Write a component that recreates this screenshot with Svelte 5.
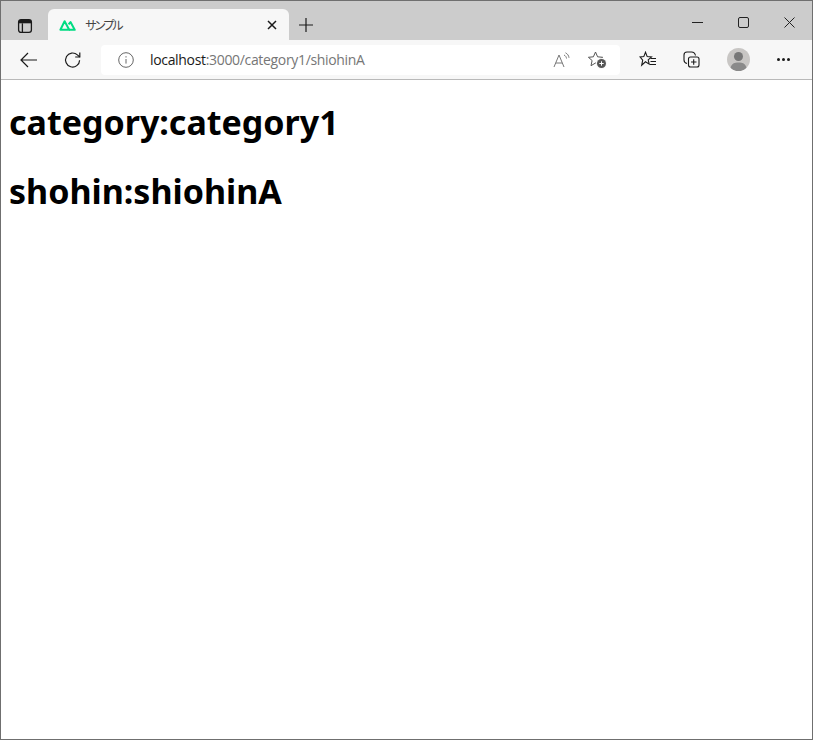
<script>
    const category = "category1";
    const shohin = "shiohinA";
</script>

<div class="window">
    <div class="tabstrip">
        <button class="tab-actions" aria-label="tab actions">
            <svg width="16" height="16" viewBox="0 0 16 16" fill="none" stroke="#1a1a1a" stroke-width="1.3">
                <rect x="1.6" y="1.6" width="12.8" height="12.8" rx="2.4" />
                <path d="M5.4 5.3v9" />
                <path d="M2 2h12v3.300H2z" fill="#1a1a1a" stroke="none" />
            </svg>
        </button>
        <div class="tab">
            <svg class="favicon" width="17" height="12" viewBox="0 0 17 12" fill="none" stroke="#00dc82" stroke-width="2" stroke-linejoin="round">
                <path d="M1.400 10.800 5.600 2.200l4.600 8.600z" />
                <path d="M9.600 5.400 11.500 3l4.200 7.800H10" />
            </svg>
            <span class="tab-title">サンプル</span>
            <svg class="tab-close" width="10" height="10" viewBox="0 0 10 10" stroke="#1a1a1a" stroke-width="1.5">
                <path d="M1 1l8 8M9 1l-8 8" />
            </svg>
        </div>
        <svg class="new-tab" width="14" height="14" viewBox="0 0 14 14" stroke="#1a1a1a" stroke-width="1.2">
            <path d="M7 0v14M0 7h14" />
        </svg>
        <div class="win-controls">
            <svg width="11" height="11" viewBox="0 0 11 11" stroke="#222" stroke-width="1"><path d="M0 5.500h11" /></svg>
            <svg width="11" height="11" viewBox="0 0 11 11" fill="none" stroke="#222" stroke-width="1"><rect x="0.500" y="0.500" width="10" height="10" rx="1.500" /></svg>
            <svg width="11" height="11" viewBox="0 0 11 11" stroke="#222" stroke-width="1"><path d="M0.500 0.500l10 10M10.500 0.500l-10 10" /></svg>
        </div>
    </div>

    <div class="toolbar">
        <svg class="back" width="18" height="16" viewBox="0 0 18 16" fill="none" stroke="#1a1a1a" stroke-width="1.2">
            <path d="M1 8h16M8 1 1 8l7 7" />
        </svg>
        <svg class="reload" width="18" height="18" viewBox="0 0 18 18" fill="none" stroke="#1a1a1a" stroke-width="1.2">
            <path d="M15.600 9.200a7 7 0 1 1-2.200-5.300L15.800 6" />
            <path d="M15.800 1.400V6h-4.600" />
        </svg>
        <div class="address">
            <svg width="16" height="16" viewBox="0 0 16 16" fill="none" stroke="#666" stroke-width="1">
                <circle cx="8" cy="8" r="7.300" />
                <path d="M8 7v4.600M8 4.200v1.300" />
            </svg>
            <div class="url"><span class="host">localhost</span>:3000/category1/shiohinA</div>
            <svg class="read" width="17" height="16" viewBox="0 0 17 16" fill="none" stroke="#777" stroke-width="1">
                <path d="M1 15 6 3l5 12M2.800 11h6.400" />
                <path d="M11 3c1.500.7 2.300 1.800 2.500 3.500M12.500 .8c2 1 3.300 2.800 3.500 5" />
            </svg>
            <svg class="fav-add" width="19" height="18" viewBox="0 0 19 18" fill="none" stroke="#555" stroke-width="1">
                <path d="M7.500 1 9.600 5.800l5 .5-3.700 3.200 1.100 5-4.500-2.500L3 14.700l1.100-5.200L.4 6.300l5-.5z" />
                <circle cx="13.500" cy="12.500" r="5.500" fill="#f7f7f7" stroke="none" />
                <circle cx="13.500" cy="12.500" r="4.500" fill="#555" stroke="none" />
                <path d="M13.500 10.300v4.400M11.300 12.500h4.400" stroke="#fff" />
            </svg>
        </div>
        <svg class="favs" width="18" height="17" viewBox="0 0 18 17" fill="none" stroke="#1a1a1a" stroke-width="1.100">
            <path d="M6.500 1.200 8.200 5.600l4.300.3-3.300 3 1 4.200-3.700-2.300-3.800 3.400 1-5L1 5.900l3.800-.3z" />
            <path d="M11.500 7.500H17M11.500 10.500H17M11 13.500h6" />
        </svg>
        <svg class="collections" width="17" height="17" viewBox="0 0 17 17" fill="none" stroke="#1a1a1a" stroke-width="1.100">
            <path d="M4 12.500C2 12 1 10.500 1 9V4c0-1.700 1.300-3 3-3h4.500C10.500 1 12 2.200 12.500 4.500" />
            <rect x="5.500" y="6" width="10.500" height="10" rx="2" />
            <path d="M10.700 8.300v5.500M8 11h5.500" />
        </svg>
        <div class="avatar">
            <svg width="23" height="23" viewBox="0 0 23 23">
                <circle cx="11.500" cy="8.500" r="4.500" fill="#777" />
                <path d="M3.500 20c1-4.500 4-5.500 8-5.500s7 1 8 5.500a11.500 11.500 0 0 1-16 0z" fill="#8a8a8a" />
            </svg>
        </div>
        <div class="more"><i></i><i></i><i></i></div>
    </div>

    <main>
        <h1>category:{category}</h1>
        <h1>shohin:{shohin}</h1>
    </main>
</div>

<style>
    :global(body) {
        margin: 0;
    }

    .window {
        box-sizing: border-box;
        width: 813px;
        height: 740px;
        border: 1px solid #6f6f6f;
        display: flex;
        flex-direction: column;
        background: #fff;
        overflow: hidden;
    }

    .tabstrip {
        height: 39px;
        flex: none;
        display: flex;
        align-items: flex-end;
        background: #cccccc;
    }

    .tab-actions {
        width: 47px;
        height: 39px;
        padding: 10px 0 0;
        border: none;
        background: none;
        display: flex;
        align-items: center;
        justify-content: center;
    }

    .tab {
        box-sizing: border-box;
        width: 241px;
        height: 31px;
        padding: 0 12px 0 11px;
        display: flex;
        align-items: center;
        background: #f7f7f7;
        border-radius: 6px 6px 0 0;
    }

    .tab-title {
        margin-left: 9px;
        flex: 1;
        font: 12px "Noto Sans CJK JP", sans-serif;
        letter-spacing: -3px;
        color: #444;
    }

    .new-tab {
        margin: 0 0 8px 10px;
    }

    .win-controls {
        margin-left: auto;
        height: 39px;
        padding: 4px 17px 0 0;
        display: flex;
        gap: 35px;
        align-items: center;
        box-sizing: border-box;
    }

    .toolbar {
        height: 40px;
        flex: none;
        box-sizing: border-box;
        display: flex;
        align-items: center;
        background: #f7f7f7;
        border-bottom: 1px solid #b9b9b9;
    }

    .back {
        margin-left: 19px;
    }

    .reload {
        margin-left: 26px;
    }

    .address {
        box-sizing: border-box;
        width: 519px;
        height: 30px;
        margin-left: 19px;
        padding: 0 13px 0 17px;
        display: flex;
        align-items: center;
        background: #fff;
        border-radius: 4px;
    }

    .url {
        flex: 1;
        margin-left: 16px;
        font: 14px "Open Sans", sans-serif;
        letter-spacing: -0.33px;
        color: #767676;
    }

    .host {
        color: #1a1a1a;
    }

    .fav-add {
        margin-left: 18px;
    }

    .favs {
        margin-left: 19px;
    }

    .collections {
        margin-left: 26px;
    }

    .avatar {
        width: 23px;
        height: 23px;
        margin-left: 27px;
        background: #c8c6c4;
        border-radius: 50%;
        overflow: hidden;
    }

    .more {
        margin-left: 27px;
        display: flex;
        gap: 2px;
    }

    .more i {
        width: 3px;
        height: 3px;
        background: #1a1a1a;
        border-radius: 50%;
    }

    main {
        padding: 8px;
    }

    h1 {
        margin: 28px 0;
        font: bold 34px/41px "Noto Sans", sans-serif;
        color: #000;
    }

    h1:first-child {
        margin-top: 14px;
    }
</style>
